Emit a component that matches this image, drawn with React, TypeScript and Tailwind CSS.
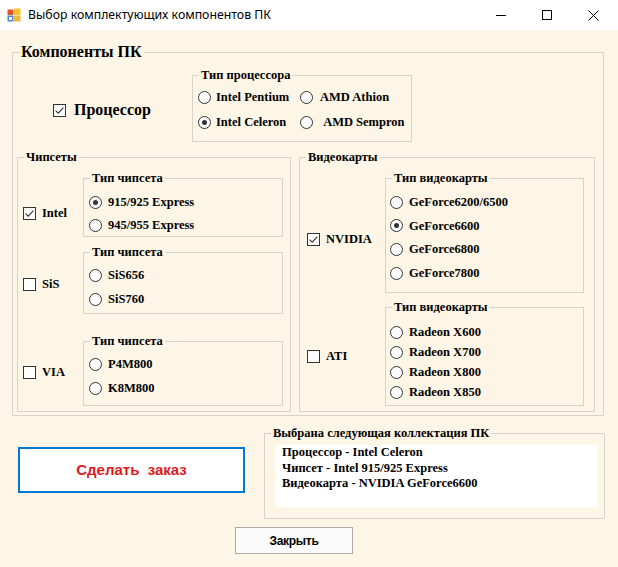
import React from "react";

const SERIF = "[font-family:'Liberation_Serif','Times_New_Roman',serif]";
const SANS = "[font-family:'Liberation_Sans',Arial,sans-serif]";

function Radio({ checked = false, label, gap = "ml-[6px]" }: { checked?: boolean; label: string; gap?: string }) {
  return (
    <div className="flex items-center h-[18px]">
      <span className="w-[13px] h-[13px] rounded-full border border-[#333333] bg-white flex items-center justify-center shrink-0">
        {checked && <span className="w-[5px] h-[5px] rounded-full bg-[#333333]" />}
      </span>
      <span className={`${gap} text-[12.5px] font-bold whitespace-nowrap leading-[18px] text-black`}>{label}</span>
    </div>
  );
}

function Check({ checked = false, label, big = false }: { checked?: boolean; label: string; big?: boolean }) {
  return (
    <div className={`flex items-center ${big ? "h-[18px]" : "h-[16px]"}`}>
      <span className="w-[13px] h-[13px] border border-[#333333] bg-white shrink-0 flex items-center justify-center">
        {checked && (
          <svg width="11" height="11" viewBox="0 0 11 11">
            <path d="M1.6 5.6 L4.2 8.2 L9.4 2.6" fill="none" stroke="#333333" strokeWidth="1.1" />
          </svg>
        )}
      </span>
      <span
        className={`${big ? "ml-[8px] text-[16px]" : "ml-[6px] text-[12.5px]"} font-bold whitespace-nowrap text-black leading-none`}
      >
        {label}
      </span>
    </div>
  );
}

function Group({
  title,
  big = false,
  className = "",
  children,
}: {
  title: string;
  big?: boolean;
  className?: string;
  children?: React.ReactNode;
}) {
  return (
    <div className={`relative border border-[#D8D3CA] ${className}`}>
      <span
        className={`absolute top-[-1px] -translate-y-1/2 px-[2px] bg-[#FDF5E6] font-bold leading-none whitespace-nowrap text-black left-[6px] ${
          big ? "text-[16px]" : "text-[12.5px]"
        }`}
      >
        {title}
      </span>
      {children}
    </div>
  );
}

function TitleBar() {
  return (
    <div className="h-[30px] bg-white flex items-center shrink-0">
      <svg className="ml-[7px]" width="14" height="14" viewBox="0 0 14 14">
        <rect x="0.5" y="1.5" width="6" height="5.5" fill="#E2542F" />
        <rect x="7" y="0.5" width="6.5" height="6.5" fill="#F4C430" />
        <rect x="0.5" y="7.5" width="6" height="6" fill="#4A86D8" />
        <rect x="2" y="9" width="3" height="3" fill="#FFFFFF" />
        <rect x="7" y="7.5" width="6.5" height="6" fill="#F0B840" />
      </svg>
      <span className="ml-[7px] text-[12.3px] text-black [font-family:'Noto_Sans','Open_Sans',sans-serif]">
        Выбор комплектующих компонентов ПК
      </span>
      <div className="ml-auto flex h-full mr-[2px]">
        <div className="w-[46px] h-full flex items-center justify-center">
          <svg width="10" height="10" viewBox="0 0 10 10">
            <path d="M0 5.5 H10" stroke="#000" strokeWidth="1" />
          </svg>
        </div>
        <div className="w-[46px] h-full flex items-center justify-center">
          <svg width="10" height="10" viewBox="0 0 10 10">
            <rect x="0.5" y="0.5" width="9" height="9" fill="none" stroke="#000" strokeWidth="1" />
          </svg>
        </div>
        <div className="w-[46px] h-full flex items-center justify-center">
          <svg width="11" height="11" viewBox="0 0 11 11">
            <path d="M0.5 0.5 L10.5 10.5 M10.5 0.5 L0.5 10.5" stroke="#000" strokeWidth="1" />
          </svg>
        </div>
      </div>
    </div>
  );
}

export default function App() {
  return (
    <div className={`w-[618px] h-[567px] bg-[#FDF5E6] overflow-hidden flex flex-col ${SERIF} text-black`}>
      <TitleBar />
      <div className="flex flex-col pl-[12px] pt-[22px]">
        {/* Outer group */}
        <Group title="Компоненты ПК" big className="w-[592px] h-[364px]">
          <div className="flex flex-col">
            {/* Row 1: processor */}
            <div className="flex mt-[22px]">
              <div className="ml-[40px] w-[139px] mt-[26px]">
                <Check checked big label="Процессор" />
              </div>
              <Group title="Тип процессора" className="w-[220px] h-[67px]">
                <div className="grid grid-cols-[102px_auto] gap-y-[7px] pt-[12px] pl-[5px]">
                  <Radio label="Intel Pentium" gap="ml-[5px]" />
                  <Radio label="AMD Athion" gap="ml-[7px]" />
                  <Radio checked label="Intel Celeron" gap="ml-[5px]" />
                  <Radio label={"\u00a0AMD Sempron"} gap="ml-[7px]" />
                </div>
              </Group>
            </div>

            {/* Row 2 */}
            <div className="flex mt-[15px] ml-[4px]">
              {/* Chipsets */}
              <Group title="Чипсеты" className="w-[274px] h-[255px]">
                <div className="flex flex-col pl-[5px]">
                  <div className="flex mt-[20px]">
                    <div className="w-[60px] mt-[27px]">
                      <Check checked label="Intel" />
                    </div>
                    <Group title="Тип чипсета" className="w-[200px] h-[59px]">
                      <div className="flex flex-col gap-[5px] pt-[14px] pl-[5px]">
                        <Radio checked label="915/925 Express" />
                        <Radio label="945/955 Express" />
                      </div>
                    </Group>
                  </div>
                  <div className="flex mt-[15px]">
                    <div className="w-[60px] mt-[24px]">
                      <Check label="SiS" />
                    </div>
                    <Group title="Тип чипсета" className="w-[200px] h-[62px]">
                      <div className="flex flex-col gap-[6px] pt-[13px] pl-[5px]">
                        <Radio label="SiS656" />
                        <Radio label="SiS760" />
                      </div>
                    </Group>
                  </div>
                  <div className="flex mt-[27px]">
                    <div className="w-[60px] mt-[23px]">
                      <Check label="VIA" />
                    </div>
                    <Group title="Тип чипсета" className="w-[200px] h-[65px]">
                      <div className="flex flex-col gap-[6px] pt-[13px] pl-[5px]">
                        <Radio label="P4M800" />
                        <Radio label="K8M800" />
                      </div>
                    </Group>
                  </div>
                </div>
              </Group>

              {/* Videocards */}
              <Group title="Видеокарты" className="w-[296px] h-[255px] ml-[8px]">
                <div className="flex flex-col pl-[7px]">
                  <div className="flex mt-[20px]">
                    <div className="w-[78px] mt-[53px]">
                      <Check checked label="NVIDIA" />
                    </div>
                    <Group title="Тип видеокарты" className="w-[199px] h-[115px]">
                      <div className="flex flex-col gap-[5.7px] pt-[14px] pl-[4px]">
                        <Radio label="GeForce6200/6500" />
                        <Radio checked label="GeForce6600" />
                        <Radio label="GeForce6800" />
                        <Radio label="GeForce7800" />
                      </div>
                    </Group>
                  </div>
                  <div className="flex mt-[14px]">
                    <div className="w-[78px] mt-[41px]">
                      <Check label="ATI" />
                    </div>
                    <Group title="Тип видеокарты" className="w-[199px] h-[99px]">
                      <div className="flex flex-col gap-[2px] pt-[15px] pl-[4px]">
                        <Radio label="Radeon X600" />
                        <Radio label="Radeon X700" />
                        <Radio label="Radeon X800" />
                        <Radio label="Radeon X850" />
                      </div>
                    </Group>
                  </div>
                </div>
              </Group>
            </div>
          </div>
        </Group>

        {/* Bottom row */}
        <div className="flex items-start mt-[17px]">
          <button className="mt-[14px] ml-[6px] w-[227px] h-[46px] bg-white border-2 border-[#0078D7] flex items-center justify-center">
            <span className={`text-[15px] font-bold text-[#E0191E] ${SANS} whitespace-pre`}>
              Сделать  заказ
            </span>
          </button>
          <Group title="Выбрана следующая коллектация ПК" className="ml-[19px] w-[341px] h-[86px]">
            <div className="ml-[10px] mt-[11px] w-[322px] h-[62px] bg-white pl-[7px] text-[12.5px] font-bold leading-[15.5px]">
              <div>Процессор - Intel Celeron</div>
              <div>Чипсет - Intel 915/925 Express</div>
              <div>Видеокарта - NVIDIA GeForce6600</div>
            </div>
          </Group>
        </div>

        <button className="mt-[8px] ml-[223px] w-[118px] h-[27px] bg-[#FBFBFB] border border-[#ADADAD] flex items-center justify-center">
          <span className={`text-[12px] font-bold text-black ${SANS} tracking-[-0.3px]`}>Закрыть</span>
        </button>
      </div>
    </div>
  );
}
